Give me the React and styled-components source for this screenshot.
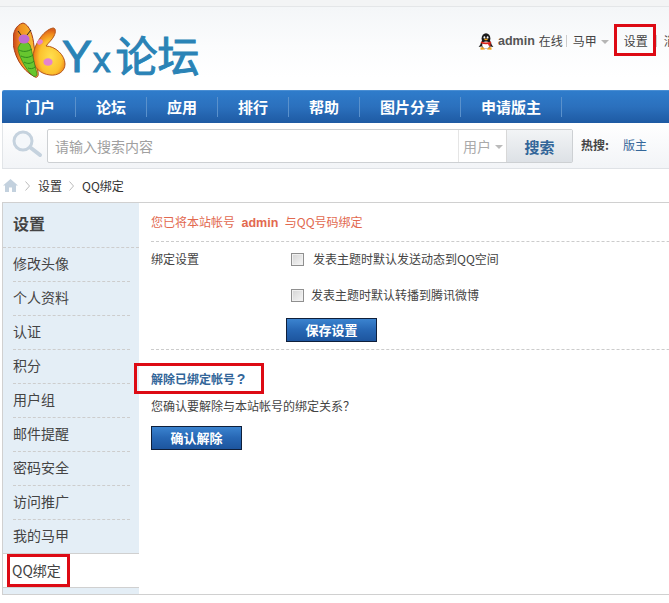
import React from "react";
import styled, { createGlobalStyle } from "styled-components";

const Global = createGlobalStyle`
  html, body { margin: 0; padding: 0; background: #fff; overflow: hidden; }
  body { font: 12px/1.5 "Noto Sans CJK SC", "Liberation Sans", sans-serif; color: #444; }
  * { box-sizing: border-box; }
`;

const Page = styled.div`width: 1000px; height: 603px; overflow: hidden;`;
const TopStrip = styled.div`height: 7px; background: #f3f4f5; border-bottom: 1px solid #e4e6e8;`;
const Header = styled.header`
  height: 83px; display: flex; padding-left: 13px;
  background: linear-gradient(#f4f6f8, #fbfcfd 40px, #fff 70px);
`;
const Logo = styled.a`display: flex; align-items: flex-start; width: 465px; height: 83px; padding-top: 15px;`;
const LogoText = styled.span`
  margin: 7px 0 0 -7px; color: #2a83b6; font-size: 42px; line-height: 50px; white-space: nowrap; display: flex; align-items: baseline;
  -webkit-text-stroke: 1px #2a83b6;
`;
const LogoLatin = styled.span`font-family: "Liberation Sans", sans-serif; font-size: 45px; letter-spacing: 1px;`;
const LogoLatinSmall = styled.span`font-family: "Liberation Sans", sans-serif; font-size: 35px; margin-right: 5px;`;

const UserBar = styled.nav`display: flex; align-items: center; height: 18px; margin-top: 25px; white-space: nowrap; color: #444;`;
const Name = styled.b`margin: 0 4px; color: #555; font-family: "Liberation Sans", sans-serif; font-size: 12.5px;`;
const Sep = styled.i`display: inline-block; width: 1px; height: 12px; background: #ccc; margin: 0 ${(p) => p.$r}px 0 ${(p) => p.$l}px;`;
const Caret = styled.i`
  display: inline-block; width: 0; height: 0; margin: 2px 15px 0 4px;
  border-left: 4px solid transparent; border-right: 4px solid transparent; border-top: 4px solid #b5b5b5;
`;
const Marked = styled.span`
  position: relative; display: inline-block;
  &::after { content: ""; position: absolute; pointer-events: none; border: 3px solid #dd0a14; inset: ${(p) => p.$inset}; }
`;

const Nav = styled.nav`
  margin-left: 2px; height: 33px; display: flex; align-items: center; padding-left: 3px;
  background: linear-gradient(#2f7ccb, #2b70bd 50%, #1e5aa3);
  border-top: 1px solid #4a8ed3; border-radius: 2px 0 0 0;
`;
const NavItem = styled.a`
  height: 20px; display: flex; align-items: center; padding: 0 20px;
  border-right: 1px solid #5a91cc; color: #fff; font-size: 15px; font-weight: 700; line-height: 20px;
`;

const SearchBar = styled.div`
  margin-left: 2px; height: 46px; display: flex; align-items: flex-start; padding: 6px 0 0 8px;
  background: linear-gradient(#fff, #f2f4f7);
  border-left: 1px solid #e2e5e8; border-bottom: 1px solid #dfe2e6;
`;
const Magnifier = styled.svg`width: 32px; height: 32px; margin-right: 4px; flex: none;`;
const SearchBox = styled.div`
  display: flex; width: 526px; height: 34px; border: 1px solid #cdd0d3; border-radius: 2px; background: #fff; flex: none;
`;
const Input = styled.div`flex: 1; padding-left: 7px; color: #a0a0a0; font-size: 14px; line-height: 32px;`;
const Scope = styled.div`
  width: 49px; border-left: 1px solid #e5e5e5; border-right: 1px solid #d8d8d8; padding-left: 4px; color: #aaa; font-size: 14px; line-height: 32px;
  display: flex; align-items: center;
`;
const ScopeCaret = styled.i`
  width: 0; height: 0; margin: 2px 0 0 4px; border-left: 4px solid transparent; border-right: 4px solid transparent; border-top: 4px solid #bbb;
`;
const SearchBtn = styled.div`
  width: 65px; text-align: center; font-size: 15px; font-weight: 700; color: #336699; line-height: 34px;
  background: linear-gradient(#f2f4f6, #dde1e6);
`;
const Hot = styled.div`display: flex; margin-left: 8px; line-height: 32px; white-space: nowrap;`;
const HotLabel = styled.b`width: 42px; color: #444;`;
const HotLink = styled.a`color: #336699;`;

const Crumbs = styled.div`height: 33px; display: flex; align-items: center; padding-left: 3px; color: #333; white-space: nowrap;`;
const HomeIcon = styled.svg`width: 15px; height: 13px; margin-right: 7px;`;
const Chevron = styled.svg`width: 5px; height: 10px; margin-right: 8px;`;
const Crumb = styled.span`margin-right: 7px;`;

const Main = styled.main`
  margin-left: 2px; height: 393px; display: flex; border: 1px solid #d0d0d0; border-right: 0;
`;
const Side = styled.aside`width: 136px; flex: none; background: #e4eef6;`;
const SideTitle = styled.h2`
  margin: 0; height: 45px; padding: 0 10px; font-size: 16px; font-weight: 700; line-height: 41px; color: #444;
  border-bottom: 1px dashed #cdcdcd;
`;
const SideItem = styled.a`
  display: block; height: ${(p) => (p.$last ? 33 : 34)}px; margin: 0 9px 0 10px;
  font-size: 14px; line-height: 31px; color: #444;
  border-bottom: ${(p) => (p.$last ? "0" : "1px dashed #cdcdcd")};
`;
const ActiveItem = styled.a`
  display: block; height: 35px; padding-left: 9px; background: #fff; font-size: 14px; line-height: 33px; color: #444;
  border-top: 1px solid #d0d0d0; border-bottom: 1px solid #d0d0d0;
`;
const Content = styled.section`flex: 1; padding-left: 12px; background: #fff;`;
const Notice = styled.p`
  margin: 0; height: 39px; line-height: 38px; color: #e2694f; border-bottom: 1px dashed #ccc; font-size: 12px;
`;
const NoticeName = styled.b`margin: 0 3px; font-family: "Liberation Sans", sans-serif; font-size: 12.5px;`;
const Form = styled.div`display: grid; grid-template-columns: 140px 1fr; height: 108px; border-bottom: 1px dashed #ccc; padding-top: 7px;`;
const FormLabel = styled.div`line-height: 20px; color: #444;`;
const Options = styled.div`display: flex; flex-direction: column; align-items: flex-start;`;
const Option = styled.label`display: flex; align-items: center; height: 20px; line-height: 20px; margin-bottom: ${(p) => p.$b}px; color: #444;`;
const Check = styled.i`
  display: inline-block; width: 13px; height: 13px; margin-right: ${(p) => p.$gap}px; border: 1px solid #8f8f8f;
  background: linear-gradient(135deg, #d4d4d4, #f6f6f6);
  box-shadow: inset 0 0 0 1px #f0f0f0;
`;
const BlueBtn = styled.button`
  display: block; height: 24px; width: 91px; padding: 0; margin-left: ${(p) => p.$l || 0}px; border: 1px solid #0f1f3a; color: #fff; font: 700 13px/20px "Noto Sans CJK SC", sans-serif;
  background: linear-gradient(#3b83cf, #2767b4 50%, #1d559e);
`;
const Release = styled.h3`margin: 19px 0 0; font-size: 12px; font-weight: 700; color: #336699; line-height: 20px;`;
const QMark = styled.span`display: inline-block; width: 12px; text-align: center; font-family: "Liberation Sans", sans-serif; font-size: 14px;`;
const ReleaseText = styled.p`margin: 7px 0 10px; line-height: 20px; color: #444;`;

const Butterfly = () => (
  <svg width="56" height="58" viewBox="0 0 56 58" style={{ flex: "none" }}>
    <defs>
      <radialGradient id="wingR" cx=".55" cy=".62" r=".58">
        <stop offset="0" stopColor="#ffdf4e" />
        <stop offset=".6" stopColor="#fcc22e" />
        <stop offset=".85" stopColor="#f08a1c" />
        <stop offset="1" stopColor="#d9601a" />
      </radialGradient>
      <linearGradient id="wingL" x1="0" x2="1">
        <stop offset="0" stopColor="#c9401c" />
        <stop offset=".3" stopColor="#f0921f" />
        <stop offset="1" stopColor="#fbc93a" />
      </linearGradient>
    </defs>
    <path d="M10 1C3 3 0 10 0 18 0 32 8 48 22 55c2 1 4-1 3-5L21 24C20 14 17 3 10 1Z" fill="url(#wingL)" stroke="#a83c18" />
    <path d="M40 6c3 0 3 4 1 8-2 4-5 6-8 10 9 0 19 9 19 18 0 8-8 12-15 11-10-1-17-8-17-17C20 24 30 8 40 6Z" fill="url(#wingR)" stroke="#b4561a" />
    <path d="M7 22c3-3 7-3 10 1 2 7 5 21 7 29 0 3-3 3-5 1C12 47 5 32 5 26Z" fill="#67c62f" stroke="#2f7a1d" strokeWidth=".7" />
    <path d="M6 28c4 2 8 2 13-1M8 34c4 2 8 2 12-1M11 40c3 2 7 2 10-1M15 46c2 1 5 1 7-1" stroke="#2f8a1d" fill="none" />
    <ellipse cx="11" cy="17" rx="5.5" ry="4.5" fill="#c06ad0" />
    <path d="M8 13 5 9M14 13l4-5" stroke="#222" />
    <ellipse cx="27" cy="20" rx="3" ry="2.4" transform="rotate(-35 27 20)" fill="#e583cf" />
    <ellipse cx="35" cy="40" rx="4.6" ry="3.8" fill="#e583cf" />
  </svg>
);

const Penguin = () => (
  <svg width="16" height="17" viewBox="0 0 16 17">
    <ellipse cx="8" cy="5.6" rx="4.4" ry="5.4" fill="#1a1a1a" />
    <ellipse cx="8" cy="11" rx="5.4" ry="4.6" fill="#1a1a1a" />
    <ellipse cx="8" cy="12" rx="3.8" ry="3.4" fill="#fff" />
    <path d="M3.2 8.4c3 1.4 6.6 1.4 9.6 0l.5 1.7c-3.2 1.6-7.4 1.6-10.6 0Z" fill="#d8261c" />
    <path d="M9.6 10l3 0 .4 3.4-2.4-.8Z" fill="#d8261c" />
    <ellipse cx="6.4" cy="4.4" rx=".9" ry="1.2" fill="#fff" />
    <ellipse cx="9.6" cy="4.4" rx=".9" ry="1.2" fill="#fff" />
    <path d="M5.8 6.2 8 5.4l2.2.8L8 7.6Z" fill="#f2a31b" />
    <path d="M2.5 14.6c1.4-.8 3.6-.4 4.5 1.8l-4.5.4ZM13.5 14.6c-1.4-.8-3.6-.4-4.5 1.8l4.5.4Z" fill="#f2a31b" />
    <path d="M3.2 10.6.6 14l2.8-.4ZM12.8 10.6l2.6 3.4-2.8-.4Z" fill="#1a1a1a" />
  </svg>
);

const navItems = ["门户", "论坛", "应用", "排行", "帮助", "图片分享", "申请版主"];
const sideItems = ["修改头像", "个人资料", "认证", "积分", "用户组", "邮件提醒", "密码安全", "访问推广"];

const BreadChevron = () => (
  <Chevron viewBox="0 0 5 10">
    <path d="M.5.5 4.5 5 .5 9.5" fill="none" stroke="#bbb" />
  </Chevron>
);

export default function App() {
  return (
    <Page>
      <Global />
      <TopStrip />
      <Header>
        <Logo>
          <Butterfly />
          <LogoText>
            <LogoLatin>Y</LogoLatin>
            <LogoLatinSmall>x</LogoLatinSmall>论坛
          </LogoText>
        </Logo>
        <UserBar>
          <Penguin />
          <Name>admin</Name>
          在线
          <Sep $l={3} $r={6} />
          马甲
          <Caret />
          <Marked $inset="-8px -8px -6px -10px">设置</Marked>
          <Sep $l={8} $r={7} />
          消息
        </UserBar>
      </Header>
      <Nav>
        {navItems.map((n) => (
          <NavItem key={n}>{n}</NavItem>
        ))}
      </Nav>
      <SearchBar>
        <Magnifier viewBox="0 0 32 32">
          <circle cx="12" cy="12" r="9" fill="#f4f7fa" stroke="#c5d2de" strokeWidth="3" />
          <path d="M20 19 29 26" stroke="#c5d2de" strokeWidth="4" strokeLinecap="round" />
        </Magnifier>
        <SearchBox>
          <Input>请输入搜索内容</Input>
          <Scope>
            用户
            <ScopeCaret />
          </Scope>
          <SearchBtn>搜索</SearchBtn>
        </SearchBox>
        <Hot>
          <HotLabel>热搜:</HotLabel>
          <HotLink>版主</HotLink>
        </Hot>
      </SearchBar>
      <Crumbs>
        <HomeIcon viewBox="0 0 15 13">
          <path d="M7.5 0 15 6.5h-2V13H9V8.5H6V13H2V6.5H0Z" fill="#c3d1de" />
        </HomeIcon>
        <BreadChevron />
        <Crumb>设置</Crumb>
        <BreadChevron />
        <Crumb>QQ绑定</Crumb>
      </Crumbs>
      <Main>
        <Side>
          <SideTitle>设置</SideTitle>
          {sideItems.map((s) => (
            <SideItem key={s}>{s}</SideItem>
          ))}
          <SideItem $last>我的马甲</SideItem>
          <ActiveItem>
            <Marked $inset="0 -9px 0 -5px">QQ绑定</Marked>
          </ActiveItem>
        </Side>
        <Content>
          <Notice>
            您已将本站帐号<NoticeName> admin </NoticeName>与QQ号码绑定
          </Notice>
          <Form>
            <FormLabel>绑定设置</FormLabel>
            <Options>
              <Option $b={16}>
                <Check $gap={9} />
                发表主题时默认发送动态到QQ空间
              </Option>
              <Option $b={13}>
                <Check $gap={7} />
                发表主题时默认转播到腾讯微博
              </Option>
              <BlueBtn $l={-5}>保存设置</BlueBtn>
            </Options>
          </Form>
          <Release>
            <Marked $inset="-6px -17px -5px -17px">
              解除已绑定帐号<QMark>?</QMark>
            </Marked>
          </Release>
          <ReleaseText>您确认要解除与本站帐号的绑定关系？</ReleaseText>
          <BlueBtn>确认解除</BlueBtn>
        </Content>
      </Main>
    </Page>
  );
}
